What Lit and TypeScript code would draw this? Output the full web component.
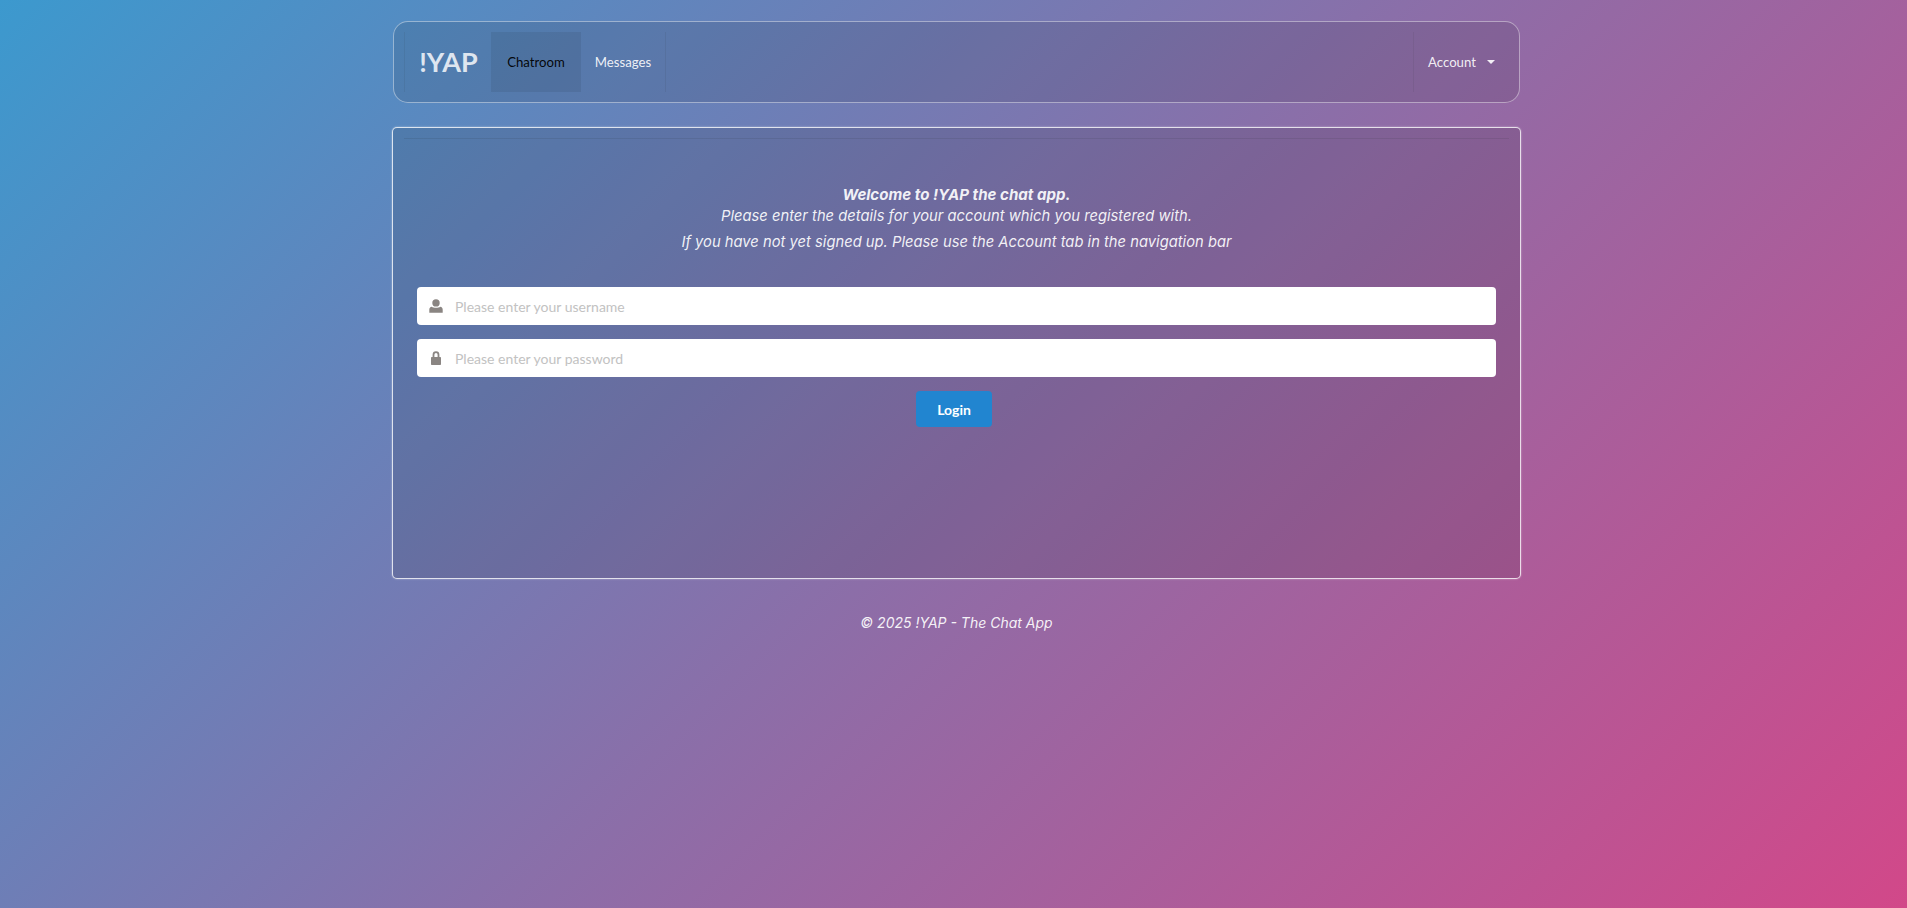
import { LitElement, html, css } from "lit";
import { customElement } from "lit/decorators.js";

@customElement("app-root")
export class AppRoot extends LitElement {
  static styles = css`
    :host {
      display: block;
      box-sizing: border-box;
      width: 100%;
      height: 908px;
      overflow: hidden;
      background: linear-gradient(135deg, #3c99ce 0%, #8a6fa9 50%, #d24889 100%);
      font-family: Lato, "Liberation Sans", sans-serif;
      color: #fff;
    }
    * { box-sizing: border-box; }
    .wrap {
      width: 1127px;
      margin-left: 393px;
      padding-top: 21px;
      display: flex;
      flex-direction: column;
    }
    .nav {
      height: 82px;
      border: 1px solid rgba(255, 255, 255, 0.42);
      border-radius: 15px;
      background: rgba(0, 0, 0, 0.09);
      padding: 10px;
      display: flex;
      align-items: stretch;
    }
    .item {
      display: flex;
      align-items: center;
      justify-content: center;
      font-size: 13.2px;
      color: rgba(255, 255, 255, 0.9);
      border-right: 1px solid rgba(34, 36, 38, 0.08);
      padding-bottom: 1px;
    }
    .brand {
      width: 87px;
      font-size: 27px;
      font-weight: 700;
      color: rgba(255, 255, 255, 0.82);
      border-left: 1px solid rgba(34, 36, 38, 0.08);
      border-right: none;
      padding-left: 1px;
    }
    .chat {
      width: 90px;
      color: rgba(0, 0, 0, 0.95);
      background: rgba(0, 0, 0, 0.07);
      border-right: none;
    }
    .msg { width: 85px; }
    .spacer { flex: 1; }
    .account {
      width: 96px;
      gap: 11px;
      border-right: none;
      border-left: 1px solid rgba(34, 36, 38, 0.08);
    }
    .caret {
      width: 0;
      height: 0;
      border-left: 4px solid transparent;
      border-right: 4px solid transparent;
      border-top: 4px solid rgba(255, 255, 255, 0.9);
    }
    .panel {
      margin: 24px -1px 0;
      height: 452px;
      border: 1px solid rgba(255, 255, 255, 0.8);
      border-radius: 5px;
      background: rgba(0, 0, 0, 0.1);
      box-shadow: 0 0 2px rgba(255, 255, 255, 0.5);
      padding: 10px 11px 0;
      display: flex;
      flex-direction: column;
    }
    .inner {
      flex: 1;
      border-top: 1px solid rgba(34, 36, 38, 0.1);
      padding: 14px 13px 0 13px;
      display: flex;
      flex-direction: column;
      align-items: stretch;
    }
    .intro {
      margin-top: 31px;
      text-align: center;
      font-family: Inter, "Open Sans", sans-serif;
      font-style: italic;
      font-size: 14.75px;
      line-height: 21px;
      color: rgba(255, 255, 255, 0.92);
    }
    .intro p { margin: 0 0 5px; }
    .intro b { font-weight: 700; display: block; font-size: 15.1px; line-height: 22px; }
    .field {
      height: 38px;
      background: #fff;
      border-radius: 4px;
      display: flex;
      align-items: center;
      padding-left: 12px;
      gap: 12px;
      font-size: 14px;
      color: #c2c2c2;
      margin-bottom: 14px;
    }
    .first { margin-top: 29px; }
    .field svg { width: 14px; height: 14px; fill: #8a8582; flex: none; }
    .login {
      align-self: center;
      margin-left: -5px;
      width: 76px;
      height: 36px;
      border: none;
      border-radius: 4px;
      background: #2185d0;
      color: #fff;
      font: 700 14px Lato, sans-serif;
    }
    .foot {
      margin-top: 34px;
      text-align: center;
      font-family: Inter, "Open Sans", sans-serif;
      font-style: italic;
      font-size: 14px;
      line-height: 20px;
      color: rgba(255, 255, 255, 0.92);
    }
  `;

  render() {
    return html`
      <div class="wrap">
        <nav class="nav">
          <div class="item brand">!YAP</div>
          <div class="item chat">Chatroom</div>
          <div class="item msg">Messages</div>
          <div class="spacer"></div>
          <div class="item account">Account <span class="caret"></span></div>
        </nav>
        <section class="panel">
          <div class="inner">
            <div class="intro">
              <p><b>Welcome to !YAP the chat app.</b>Please enter the details for your account which you registered with.</p>
              <p>If you have not yet signed up. Please use the Account tab in the navigation bar</p>
            </div>
            <div class="field first">
              <svg viewBox="0 0 14 14"><path d="M7 0.2a3.7 3.7 0 1 1 0 7.4a3.7 3.7 0 0 1 0-7.4ZM2.6 7.8c1 .6 2.8 1 4.4 1s3.4-.4 4.4-1c1.3.3 2.3 1.4 2.3 2.9v3H.3v-3c0-1.5 1-2.6 2.3-2.9Z"/></svg>
              <span>Please enter your username</span>
            </div>
            <div class="field">
              <svg viewBox="0 0 14 14"><path d="M3.6 6V3.7a3.4 3.4 0 0 1 6.8 0V6h.6c.6 0 1 .4 1 1v6c0 .6-.4 1-1 1H3c-.6 0-1-.4-1-1V7c0-.6.4-1 1-1h.6ZM5.4 6h3.2V3.7a1.6 1.6 0 0 0-3.2 0V6Z"/></svg>
              <span>Please enter your password</span>
            </div>
            <button class="login">Login</button>
          </div>
        </section>
        <div class="foot">© 2025 !YAP - The Chat App</div>
      </div>
    `;
  }
}
